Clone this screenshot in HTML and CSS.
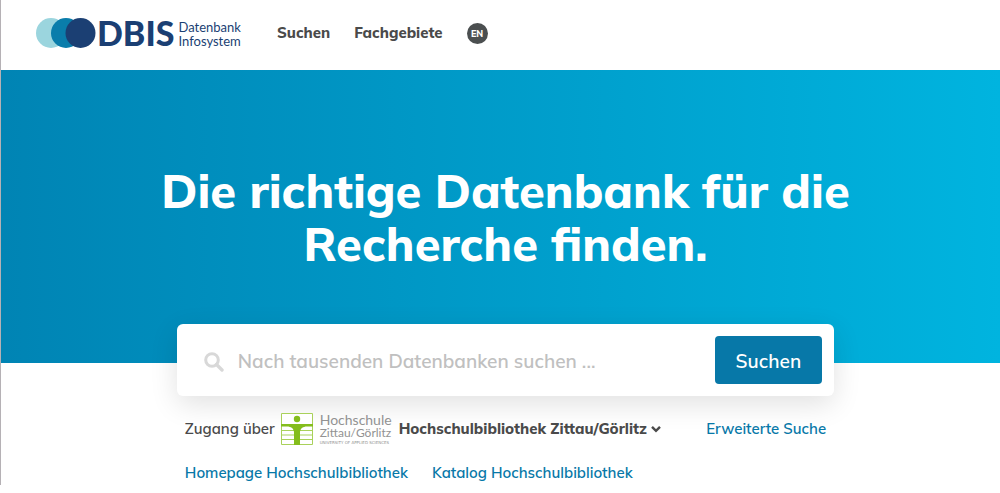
FILE: index.html
```html
<!DOCTYPE html>
<html lang="de">
<head>
<meta charset="utf-8">
<meta name="viewport" content="width=device-width, initial-scale=1">
<title>DBIS Datenbank Infosystem</title>
<link rel="stylesheet" href="styles.css">
</head>
<body>
<header class="header">
  <a class="logo" href="#">
    <svg class="logo-mark" viewBox="0 0 60 32" aria-hidden="true">
      <circle cx="15" cy="16" r="15" fill="#9bd5de"/>
      <circle cx="30" cy="16" r="15" fill="#0a7dab"/>
      <circle cx="44.500" cy="16" r="15" fill="#1b3f73"/>
    </svg>
    <span class="logo-name">DBIS</span>
    <span class="logo-claim"><span>Datenbank</span><span>Infosystem</span></span>
  </a>
  <nav class="nav">
    <a href="#">Suchen</a>
    <a href="#">Fachgebiete</a>
    <a class="lang" href="#">EN</a>
  </nav>
</header>
<main>
  <section class="hero">
    <h1>Die richtige Datenbank für die<br>Recherche finden.</h1>
  </section>
  <div class="search-area">
    <form class="search">
      <svg class="search-icon" viewBox="0 0 20 20" aria-hidden="true">
        <circle cx="8" cy="8" r="6.300" fill="none" stroke="currentColor" stroke-width="3"/>
        <path d="M12.500 12.500 18 18" stroke="currentColor" stroke-width="3.400" stroke-linecap="round"/>
      </svg>
      <input class="search-input" type="text" aria-label="Suchbegriff" placeholder="Nach tausenden Datenbanken suchen ...">
      <button class="search-button" type="button">Suchen</button>
    </form>
    <div class="access">
      <span>Zugang über</span>
      <span class="school">
        <svg class="school-mark" viewBox="0 0 32 32" aria-hidden="true">
          <path d="M.5.5h31v31H.5z" fill="#fff" stroke="#a9d15a"/>
          <path d="M1 17.500h30M1 22h30M1 26.500h30" stroke="#a9d15a"/>
          <circle cx="16" cy="6" r="3.200" fill="#84bd1c"/>
          <path d="M0 11h32v2.500H26c-4 0-7 2-7 6V32h-6V19.500c0-4-3-6-7-6H0z" fill="#84bd1c"/>
        </svg>
        <span class="school-text">
          <span>Hochschule</span>
          <span class="school-city">Zittau/Görlitz</span>
          <span class="school-sub">UNIVERSITY OF APPLIED SCIENCES</span>
        </span>
      </span>
      <button class="library" type="button">Hochschulbibliothek Zittau/Görlitz
        <svg class="chevron" viewBox="0 0 10 8" aria-hidden="true"><path d="M1 1.800 5 5.800 9 1.800" fill="none" stroke="currentColor" stroke-width="2.400"/></svg>
      </button>
      <a class="advanced" href="#">Erweiterte Suche</a>
    </div>
    <div class="links">
      <a href="#">Homepage Hochschulbibliothek</a>
      <a href="#">Katalog Hochschulbibliothek</a>
    </div>
  </div>
</main>
</body>
</html>
```
FILE: styles.css
```css
* { box-sizing: border-box; }

body {
  margin: 0;
  border-left: 1px solid #b5b1b5;
  background: #fff;
  color: #4a4a4a;
  font-family: "Mulish", "Open Sans", sans-serif;
  font-size: 15px;
  font-weight: 600;
  line-height: 24px;
}

a { color: #0778a8; text-decoration: none; }

button { font-family: inherit; border: 0; cursor: pointer; }

.header {
  display: flex;
  align-items: center;
  gap: 36px;
  height: 70px;
  padding: 0 35px 4px;
}

.logo { display: flex; align-items: center; color: #1b3f73; }
.logo-mark { width: 60px; height: 32px; }
.logo-name { margin-left: 1px; font-family: Lato, sans-serif; font-size: 34px; font-weight: 900; line-height: 34px; }
.logo-claim {
  display: flex;
  flex-direction: column;
  margin: 2px 0 0 4px;
  font-family: Lato, sans-serif;
  font-size: 13px;
  font-weight: 400;
  line-height: 14px;
}

.nav { display: flex; align-items: center; gap: 24px; font-weight: 800; }
.nav a { color: #4a4a4a; }
.nav .lang {
  width: 21px;
  height: 21px;
  border-radius: 50%;
  background: #4b4f50;
  color: #fff;
  font-size: 9px;
  line-height: 21px;
  text-align: center;
}

.hero {
  padding: 94px 0 93px 10px;
  background: linear-gradient(90deg, #0084b4, #00b4df);
  color: #fff;
  text-align: center;
}
.hero h1 { margin: 0; font-size: 47px; font-weight: 800; line-height: 53px; }

.search-area {
  box-sizing: content-box;
  position: relative;
  width: 65.8%;
  margin: -39px auto 0;
  padding-left: 10px;
}

.search {
  display: flex;
  align-items: center;
  padding: 12px 12px 12px 27px;
  border-radius: 6px;
  background: #fff;
  box-shadow: 0 8px 28px rgba(0, 0, 0, 0.12);
}
.search-icon { flex: none; width: 20px; height: 20px; margin-top: 4px; color: #d8d8d8; }
.search-input {
  flex: 1;
  min-width: 0;
  padding: 2px 14px 0;
  border: 0;
  outline: 0;
  background: none;
  color: #4a4a4a;
  font: 600 19px/24px "Mulish", "Open Sans", sans-serif;
}
.search-input::placeholder { color: #c0c0c0; opacity: 1; }
.search-button {
  padding: 13px 21px 11px;
  border-radius: 4px;
  background: #0778a8;
  color: #fff;
  font-size: 19px;
  font-weight: 600;
  line-height: 24px;
}

.access { display: flex; align-items: center; margin-top: 17px; padding: 0 8px; }
.school { display: flex; gap: 7px; margin-left: 6px; }
.school-mark { width: 32px; height: 32px; }
.school-text {
  display: flex;
  flex-direction: column;
  color: #929292;
  font-family: Lato, sans-serif;
  font-size: 14px;
  font-weight: 400;
  line-height: 13px;
}
.school-city { font-size: 12px; line-height: 14px; }
.school-sub { font-family: "DejaVu Sans", sans-serif; font-size: 4px; line-height: 5px; }
.library {
  display: flex;
  align-items: center;
  gap: 4px;
  margin-left: 7px;
  padding: 0;
  background: none;
  color: #4a4a4a;
  font-size: 15px;
  font-weight: 800;
  line-height: 24px;
}
.chevron { width: 10px; height: 8px; }
.advanced { margin-left: auto; }

.links { display: flex; gap: 24px; margin-top: 16px; padding: 0 8px; }
```
